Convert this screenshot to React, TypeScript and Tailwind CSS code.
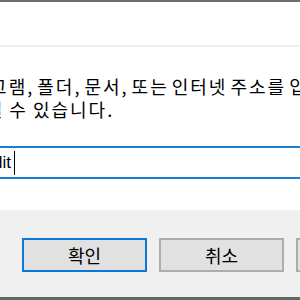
export default function App() {
  const ko = { fontFamily: '"Noto Sans CJK KR", "Noto Sans", sans-serif' };

  return (
    <div className="w-[300px] h-[300px] overflow-hidden flex flex-col bg-white" style={ko}>
      {/* top edge + title area */}
      <div className="h-[2px] bg-[#6e6e6e]" />
      <div className="h-[43px] bg-white" />
      <div className="h-[2px] bg-[#efefef]" />

      {/* message + command box */}
      <div className="h-[163px] bg-white flex flex-col">
        <div className="mt-[28px] text-[18px] leading-[23px] tracking-[2px] text-black whitespace-nowrap">
          <div className="ml-[-47px] [word-spacing:-3px]">프로그램, 폴더, 문서, 또는 인터넷 주소를 입력하여</div>
          <div className="ml-[-75px] [word-spacing:-1px]">항목을 열 수 있습니다.</div>
        </div>
        <div className="mt-[25px] -mx-[10px] h-[33px] border-2 border-[#1a7fd3] flex items-center overflow-hidden">
          <div
            className="ml-[-33px] flex items-center text-[17px] text-black whitespace-nowrap"
            style={{ fontFamily: '"Liberation Sans", sans-serif' }}
          >
            <span>regedit</span>
            <span className="ml-[3px] w-[1px] h-[24px] bg-black" />
          </div>
        </div>
      </div>

      {/* button bar */}
      <div className="flex-1 bg-[#f0f0f0] flex flex-col">
        <div className="mt-[28px] flex gap-[12px] pl-[22px] whitespace-nowrap">
          <button className="shrink-0 w-[125px] h-[34px] border-2 border-[#0a78d4] bg-[#e1e1e1] text-[18px] text-black flex items-center justify-center">
            확인
          </button>
          <button className="shrink-0 w-[125px] h-[34px] border-2 border-[#adadad] bg-[#e1e1e1] text-[18px] text-black flex items-center justify-center">
            취소
          </button>
          <button className="shrink-0 w-[125px] h-[34px] border-2 border-[#adadad] bg-[#e1e1e1] text-[18px] text-black flex items-center justify-center">
            찾아보기(B)...
          </button>
        </div>
      </div>
      <div className="h-[3px] bg-[#666666]" />
    </div>
  );
}
